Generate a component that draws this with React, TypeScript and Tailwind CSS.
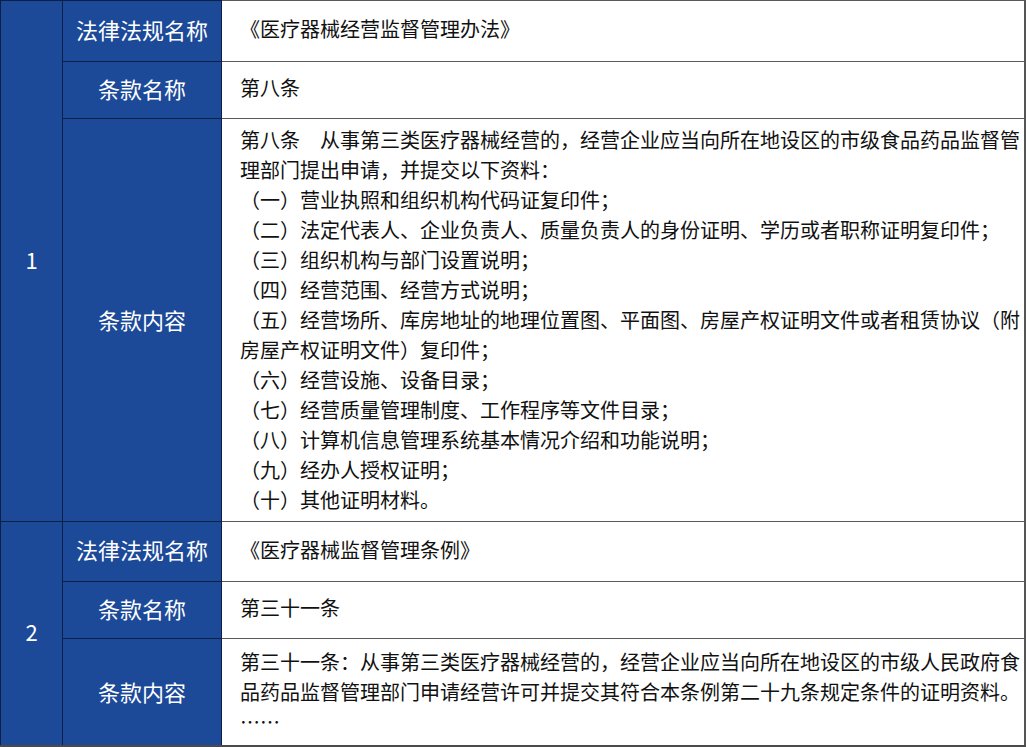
const FONT = "font-['Noto_Sans_CJK_SC','Noto_Sans',sans-serif]";

type Row = { label: string; height: string; short?: boolean; lines: string[] };

type Group = { no: string; rows: Row[] };

const groups: Group[] = [
  {
    no: "1",
    rows: [
      { label: "法律法规名称", height: "h-[61px]", short: true, lines: ["《医疗器械经营监督管理办法》"] },
      { label: "条款名称", height: "h-[57px]", short: true, lines: ["第八条"] },
      {
        label: "条款内容",
        height: "h-[403px]",
        lines: [
          "第八条\u3000从事第三类医疗器械经营的，经营企业应当向所在地设区的市级食品药品监督管理部门提出申请，并提交以下资料：",
          "（一）营业执照和组织机构代码证复印件；",
          "（二）法定代表人、企业负责人、质量负责人的身份证明、学历或者职称证明复印件；",
          "（三）组织机构与部门设置说明；",
          "（四）经营范围、经营方式说明；",
          "（五）经营场所、库房地址的地理位置图、平面图、房屋产权证明文件或者租赁协议（附房屋产权证明文件）复印件；",
          "（六）经营设施、设备目录；",
          "（七）经营质量管理制度、工作程序等文件目录；",
          "（八）计算机信息管理系统基本情况介绍和功能说明；",
          "（九）经办人授权证明；",
          "（十）其他证明材料。",
        ],
      },
    ],
  },
  {
    no: "2",
    rows: [
      { label: "法律法规名称", height: "h-[60px]", short: true, lines: ["《医疗器械监督管理条例》"] },
      { label: "条款名称", height: "h-[57px]", short: true, lines: ["第三十一条"] },
      {
        label: "条款内容",
        height: "h-[107px]",
        lines: [
          "第三十一条：从事第三类医疗器械经营的，经营企业应当向所在地设区的市级人民政府食品药品监督管理部门申请经营许可并提交其符合本条例第二十九条规定条件的证明资料。",
          "……",
        ],
      },
    ],
  },
];

function TableRow({ row }: { row: Row }) {
  return (
    <div className={`flex ${row.height}`}>
      <div
        className={`flex w-[159px] shrink-0 items-center justify-center border-t border-r border-[#0c1f45] bg-[#1c4a99] text-[22px] leading-none text-white ${
          row.short ? "pb-[5px]" : "pb-[2px]"
        }`}
      >
        {row.label}
      </div>
      <div
        className={`flex flex-1 items-center border-t border-r-2 border-t-[#5a5a5a] border-r-[#555555] bg-white pl-[18px] pr-[4px] text-[20px] leading-[30px] text-[#111111] ${
          row.short ? "pb-[4px]" : ""
        }`}
      >
        <div className="w-full">
          {row.lines.map((line, i) => (
            <p key={i}>{line}</p>
          ))}
        </div>
      </div>
    </div>
  );
}

export default function App() {
  return (
    <div className={`${FONT} h-[747px] w-[1026px] overflow-hidden bg-white`}>
      <div className="flex flex-col border-b-2 border-[#4a4a4a]">
        {groups.map((g) => (
          <div key={g.no} className="flex">
            <div className="flex w-[63px] shrink-0 items-center justify-center border-t border-r border-l border-[#0c1f45] bg-[#1c4a99] pb-[4px] text-[22px] text-white">
              {g.no}
            </div>
            <div className="flex flex-1 flex-col">
              {g.rows.map((r) => (
                <TableRow key={r.label} row={r} />
              ))}
            </div>
          </div>
        ))}
      </div>
    </div>
  );
}
